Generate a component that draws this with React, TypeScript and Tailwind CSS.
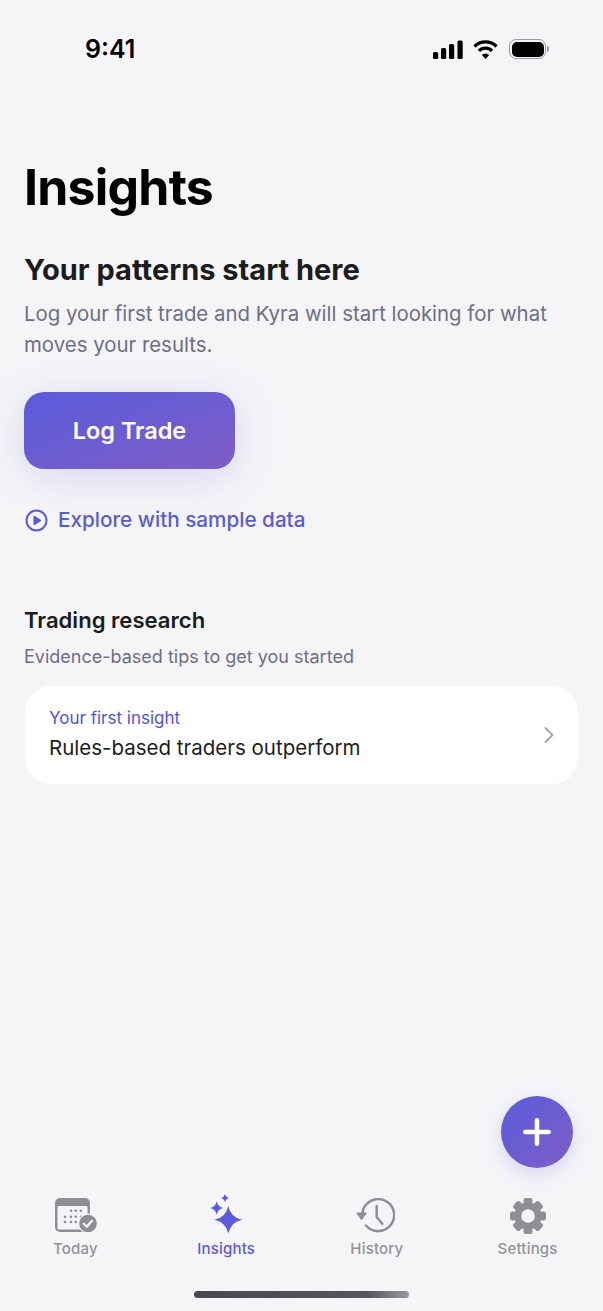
import React from 'react';
import { ChevronRight, Plus } from 'lucide-react';

const Sparkle: React.FC<{ cx: number; cy: number; r: number }> = ({ cx, cy, r }) => {
  const k = r * 0.17;
  return (
    <path
      d={`M${cx} ${cy - r}Q${cx + k} ${cy - k} ${cx + r} ${cy}Q${cx + k} ${cy + k} ${cx} ${cy + r}Q${cx - k} ${cy + k} ${cx - r} ${cy}Q${cx - k} ${cy - k} ${cx} ${cy - r}Z`}
    />
  );
};

const calendarDots = [
  [16, 12.7], [20.7, 12.7], [26, 12.7],
  [10, 18.7], [16, 18.7], [20.7, 18.7], [26, 18.7],
  [10, 24], [16, 24], [20.7, 24],
];

const TodayIcon = () => (
  <svg width="43" height="36" viewBox="0 0 43 36" fill="none" className="ml-[2px]">
    <rect x="0" y="0" width="35" height="34" rx="5" fill="#8e8e93" />
    <rect x="2.500" y="8" width="30" height="23.500" rx="1.500" fill="#f5f5f8" />
    <g fill="#8e8e93">
      {calendarDots.map(([x, y]) => (
        <circle key={`${x}-${y}`} cx={x} cy={y} r="1.300" />
      ))}
    </g>
    <circle cx="33" cy="25.500" r="10" fill="#f5f5f8" />
    <circle cx="33" cy="25.500" r="8.800" fill="#8e8e93" />
    <path d="M28.800 25.800l3 3 5.200-6" stroke="#fff" strokeWidth="2.200" strokeLinecap="round" strokeLinejoin="round" />
  </svg>
);

const InsightsIcon = () => (
  <svg width="33" height="40" viewBox="0 0 33 40" fill="#5a5bdc">
    <Sparkle cx={18.300} cy={25.700} r={13.800} />
    <Sparkle cx={6.700} cy={14} r={6.800} />
    <Sparkle cx={15} cy={4} r={4.200} />
  </svg>
);

const HistoryIcon = () => (
  <svg width="39" height="36" viewBox="0 0 39 36" fill="none" stroke="#8e8e93" strokeWidth="2.500" strokeLinecap="round" strokeLinejoin="round" className="-ml-[3px]">
    <path d="M6.400 14.500A16 16 0 1 1 10 27.500" />
    <path d="M1 15h9.500l-4.800 6.500Z" fill="#8e8e93" strokeWidth="1" />
    <path d="M20.700 8v11l5.600 6.700" />
  </svg>
);

const gearTeeth = [0, 45, 90, 135, 180, 225, 270, 315];

const SettingsIcon = () => (
  <svg width="36" height="36" viewBox="-18 -18 36 36" fill="#8e8e93">
    <circle r="13.500" />
    {gearTeeth.map((deg) => (
      <rect key={deg} x="-4.500" y="-18" width="9" height="10" rx="2.500" transform={`rotate(${deg})`} />
    ))}
    <circle r="6.800" fill="#f5f5f8" />
  </svg>
);

const tabs = [
  { label: 'Today', icon: <TodayIcon />, active: false },
  { label: 'Insights', icon: <InsightsIcon />, active: true },
  { label: 'History', icon: <HistoryIcon />, active: false },
  { label: 'Settings', icon: <SettingsIcon />, active: false },
];

const StatusBar = () => (
  <div className="flex items-center justify-between h-[98px] pl-[85px] pr-[54px]">
    <span className="mt-[2px] text-[25px] font-semibold text-black">9:41</span>
    <div className="flex items-center">
      <svg width="30" height="19" viewBox="0 0 30 19" fill="#000">
        <rect x="0" y="12" width="5.200" height="7" rx="1.500" />
        <rect x="8" y="8" width="5.200" height="11" rx="1.500" />
        <rect x="16" y="4" width="5.200" height="15" rx="1.500" />
        <rect x="24.500" y="0.500" width="5.200" height="18.500" rx="1.500" />
      </svg>
      <svg width="25" height="19" viewBox="0 0 24 19" fill="none" stroke="#000" strokeWidth="3.200" className="ml-[10px]">
        <path d="M1 6.500a15.500 15.500 0 0 1 22 0" />
        <path d="M5.400 10.800a9.300 9.300 0 0 1 13.200 0" />
        <path d="M12 19l-3.700-3.900a5.200 5.200 0 0 1 7.400 0Z" fill="#000" stroke="none" />
      </svg>
      <div className="flex items-center ml-[11px]">
        <div className="w-[37px] h-[20px] rounded-[7px] border-[1.500px] border-[#9a9aa0] p-[1.500px]">
          <div className="w-full h-full rounded-[5px] bg-black" />
        </div>
        <div className="w-[2px] h-[6px] rounded-r-sm bg-[#9a9aa0] ml-[1px]" />
      </div>
    </div>
  </div>
);

const App: React.FC = () => {
  return (
    <div className="relative flex flex-col h-[1311px] w-[603px] overflow-hidden bg-[#f5f5f8] font-['Inter',sans-serif]">
      <StatusBar />

      <main className="flex-1 px-[24px]">
        <h1 className="mt-[59px] text-[50px] leading-[60px] font-bold text-black tracking-[-0.8px]">Insights</h1>

        <h2 className="mt-[35px] text-[29px] leading-[36px] font-bold text-[#1c1c1e]">Your patterns start here</h2>
        <p className="mt-[10px] text-[20.400px] leading-[31px] text-[#6e6e85]">
          Log your first trade and Kyra will start looking for what moves your results.
        </p>

        <button className="mt-[32px] flex items-center justify-center w-[211px] h-[77px] rounded-[20px] bg-gradient-to-br from-[#5a5bdc] to-[#7f5dc6] text-[23.500px] font-semibold text-white shadow-[0_8px_44px_rgba(90,91,220,0.2)]">
          Log Trade
        </button>

        <a className="mt-[34px] flex items-center gap-[10px] pl-[1px] text-[20.700px] leading-[34px] font-medium text-[#5a5bd6]">
          <svg width="23" height="23" viewBox="0 0 23 23" fill="none" stroke="#5a5bd6" strokeWidth="2">
            <circle cx="11.500" cy="11.500" r="10" />
            <path d="M9 7l7 4.500-7 4.500Z" fill="#5a5bd6" strokeWidth="1" strokeLinejoin="round" />
          </svg>
          Explore with sample data
        </a>

        <h3 className="mt-[66px] text-[22.100px] leading-[34px] font-semibold text-[#1c1c1e]">Trading research</h3>
        <p className="mt-[7px] text-[18px] leading-[26px] text-[#6e6e85]">Evidence-based tips to get you started</p>

        <div className="mt-[16px] ml-[1px] flex items-center justify-between h-[98px] w-[553px] rounded-[26px] bg-white pl-[24px] pr-[15px]">
          <div className="pb-[2px]">
            <div className="text-[17px] leading-[24px] text-[#5254d8]">Your first insight</div>
            <div className="mt-[3px] text-[20.500px] leading-[30px] text-[#1c1c1e]">Rules-based traders outperform</div>
          </div>
          <ChevronRight size={28} strokeWidth={1.700} className="text-[#a3a3b5]" />
        </div>
      </main>

      {/* Floating add button */}
      <button className="absolute left-[501px] top-[1096px] flex items-center justify-center w-[72px] h-[72px] rounded-full bg-gradient-to-br from-[#5a5bdc] to-[#7f5dc6] shadow-[0_6px_20px_rgba(90,91,220,0.2)]">
        <Plus size={40} strokeWidth={2.700} className="text-white" />
      </button>

      <nav className="flex">
        {tabs.map((tab) => (
          <div key={tab.label} className="flex-1 flex flex-col items-center">
            <div className="flex items-end justify-center h-[42px]">{tab.icon}</div>
            <span className={`mt-[5px] text-[15px] leading-[20px] font-medium tracking-[0.2px] ${tab.active ? 'text-[#5a5bdc]' : 'text-[#929297]'}`}>
              {tab.label}
            </span>
          </div>
        ))}
      </nav>

      <div className="flex justify-center pt-[32px] pb-[13px]">
        <div className="w-[215px] h-[7px] rounded-full bg-gradient-to-r from-[#48484d] via-[#55555a] via-80% to-[#98989d]" />
      </div>
    </div>
  );
};

export default App;
